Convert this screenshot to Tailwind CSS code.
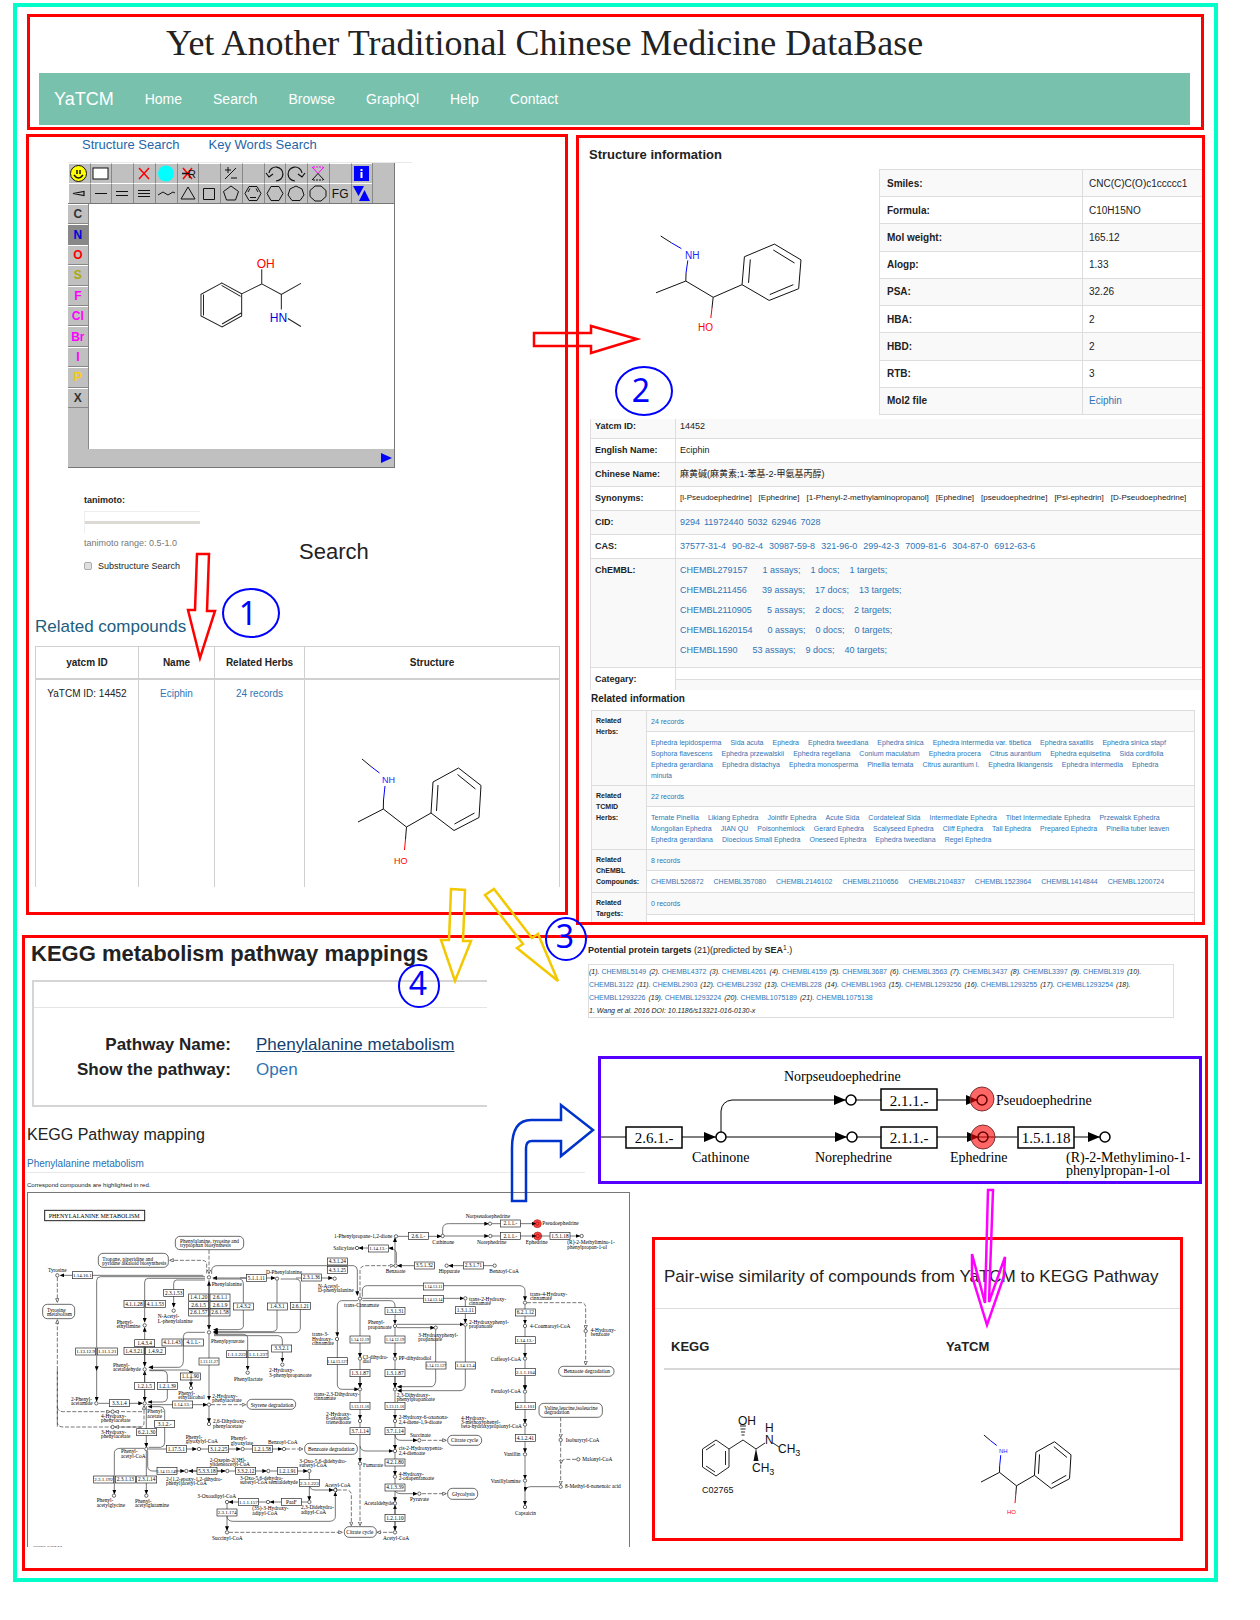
<!DOCTYPE html>
<html lang="en">
<head>
<meta charset="utf-8">
<meta name="viewport" content="width=device-width, initial-scale=1">
<title>YaTCM - Yet Another Traditional Chinese Medicine DataBase</title>
<script src="https://cdn.jsdelivr.net/npm/@tailwindcss/browser@4"></script>
</head>
<body class="bg-white font-['Liberation_Sans','Noto_Sans_CJK_SC',sans-serif] text-[#222] pb-[38px]">

<!-- shared ephedrine skeleton -->
<svg class="absolute h-0 w-0" aria-hidden="true">
  <defs>
    <g id="mol" fill="none" stroke="#111" stroke-width="1">
      <path vector-effect="non-scaling-stroke" d="M4 0L13 7.500M25.500 41L25.300 50L0 63M25.300 50L48.500 68L73 54L75 23L100.500 9L123 26.500L121 58.500L96 71.500L73 54M78.500 52L80 26M99.500 15.500L117.500 30M116.500 54L96.500 65M48.500 68L47.500 80"/>
      <path vector-effect="non-scaling-stroke" stroke="#00f" d="M13 7.500L21.500 14M27 27L25.500 41"/>
      <path vector-effect="non-scaling-stroke" stroke="#f00" d="M47.500 80L46.500 91"/>
    </g>
  </defs>
</svg>

<main class="relative mt-[3px] ml-[13px] mr-[42px] border-4 border-[#00ffc8] pt-[7px] pb-[7px]">

  <header class="mx-[10px] border-3 border-[#f00] px-[9px] pt-[8px] pb-[2px]">
    <h1 class="h-[48px] pl-[127px] font-['Liberation_Serif',serif] text-[36px] leading-[36px] whitespace-nowrap">Yet Another Traditional Chinese Medicine DataBase</h1>
    <nav class="mr-[2px] flex h-[52px] items-center gap-px bg-[#78c2ad] text-[14px] text-white">
      <a href="#" class="px-[15px] text-[18px]">YaTCM</a>
      <a href="#" class="px-[15px]">Home</a>
      <a href="#" class="px-[15px]">Search</a>
      <a href="#" class="px-[15px]">Browse</a>
      <a href="#" class="px-[15px]">GraphQl</a>
      <a href="#" class="px-[15px]">Help</a>
      <a href="#" class="px-[15px]">Contact</a>
    </nav>
  </header>

  <div class="mt-[4px] ml-[9px] mr-[9px] grid grid-cols-[542fr_629fr] items-start gap-2">

    <!-- structure search -->
    <section class="min-w-0 border-3 border-[#f00] pb-[25px]">
      <div class="flex h-[25px] gap-[29px] pl-[53px] text-[13px] leading-[16px] text-[#1f66a8]">
        <a href="#">Structure Search</a>
        <a href="#">Key Words Search</a>
      </div>
      <div class="ml-[39px] w-[344px] border-t border-[#e8e8e8]">
        <div class="flex h-[305px] w-[327px] flex-col border-r border-b border-[#777] bg-[#c0c0c0]">
          <div class="grid h-[41px] grid-cols-15 grid-rows-2 border-b border-[#777]">
            <button aria-label="Smiles" class="border-t border-l border-t-white border-l-white"><svg class="h-[19px] w-[20px]" viewBox="0 0 20 19"><circle cx="9.500" cy="9.500" r="8" fill="#ff0" stroke="#111"/><path d="M8 6v4M11 6v4M5 11q4.500 6 9 0" fill="none" stroke="#111" stroke-width="1.500"/></svg></button>
            <button aria-label="Clear" class="border-t border-l border-t-white border-l-[#888]"><svg class="h-[19px] w-[20px]" viewBox="0 0 20 19"><rect x="2" y="4" width="15" height="11" fill="#fff" stroke="#111"/></svg></button>
            <span class="border-t border-l border-t-white border-l-[#888]"></span>
            <button aria-label="Delete" class="border-t border-l border-t-white border-l-[#888]"><svg class="h-[19px] w-[20px]" viewBox="0 0 20 19"><path d="M5 4l10 11M15 4L5 15" stroke="#f00" stroke-width="1.500"/></svg></button>
            <button aria-label="Mark" class="border-t border-l border-t-white border-l-[#888]"><svg class="h-[19px] w-[20px]" viewBox="0 0 20 19"><circle cx="10" cy="9.500" r="8" fill="#0ff"/></svg></button>
            <button aria-label="Delete group" class="border-t border-l border-t-white border-l-[#888]"><svg class="h-[19px] w-[20px]" viewBox="0 0 20 19"><path d="M5 4l9 11M14 4L5 15" stroke="#f00" stroke-width="1.500"/><path d="M4 9.500h7" stroke="#111" stroke-width="1.500"/><text x="10" y="14" font-size="11" fill="#111">R</text></svg></button>
            <span class="border-t border-l border-t-white border-l-[#888]"></span>
            <button aria-label="Charge" class="border-t border-l border-t-white border-l-[#888]"><svg class="h-[19px] w-[20px]" viewBox="0 0 20 19"><path d="M15 4L4 15M4 6h6M7 3v6M10 14h6" stroke="#111"/></svg></button>
            <span class="border-t border-l border-t-white border-l-[#888]"></span>
            <button aria-label="Undo" class="border-t border-l border-t-white border-l-[#888]"><svg class="h-[19px] w-[20px]" viewBox="0 0 20 19"><path d="M11 17a7 7 0 1 0-7-8M1 9l3 4 4-3" fill="none" stroke="#111" stroke-width="1.200"/></svg></button>
            <button aria-label="Redo" class="border-t border-l border-t-white border-l-[#888]"><svg class="h-[19px] w-[20px]" viewBox="0 0 20 19"><path d="M9 17a7 7 0 1 1 7-8M12 10l4 3 3-4" fill="none" stroke="#111" stroke-width="1.200"/></svg></button>
            <button aria-label="Spiro" class="border-t border-l border-t-white border-l-[#888]"><svg class="h-[19px] w-[20px]" viewBox="0 0 20 19"><path d="M4 3l6 6.500L16 3" fill="none" stroke="#f0f"/><path d="M5 3h10" stroke="#f0f" stroke-dasharray="2 1"/><path d="M4 16l6-6.500 6 6.500" fill="none" stroke="#111"/><path d="M5 16h10" stroke="#111" stroke-dasharray="2 1"/></svg></button>
            <span class="border-t border-l border-t-white border-l-[#888]"></span>
            <button aria-label="Info" class="border-t border-l border-t-white border-l-[#888]"><svg class="h-[19px] w-[20px]" viewBox="0 0 20 19"><rect x="2" y="2" width="15" height="15" fill="#00f"/><path d="M9.500 5v2M9.500 8v6" stroke="#fff" stroke-width="2"/></svg></button>
            <span class="border-l border-[#888]"></span>
            <button aria-label="Stereo bond" class="border-t border-l border-t-white border-l-white"><svg class="h-[19px] w-[20px]" viewBox="0 0 20 19"><path d="M4 9.500l11-2v4z" fill="none" stroke="#111" stroke-width="1.200"/></svg></button>
            <button aria-label="Single bond" class="border-t border-l border-t-white border-l-[#888]"><svg class="h-[19px] w-[20px]" viewBox="0 0 20 19"><path d="M4 9.500h12" stroke="#111"/></svg></button>
            <button aria-label="Double bond" class="border-t border-l border-t-white border-l-[#888]"><svg class="h-[19px] w-[20px]" viewBox="0 0 20 19"><path d="M4 7.500h12M4 11.500h12" stroke="#111"/></svg></button>
            <button aria-label="Triple bond" class="border-t border-l border-t-white border-l-[#888]"><svg class="h-[19px] w-[20px]" viewBox="0 0 20 19"><path d="M4 6.500h12M4 9.500h12M4 12.500h12" stroke="#111"/></svg></button>
            <button aria-label="Chain" class="border-t border-l border-t-white border-l-[#888]"><svg class="h-[19px] w-[20px]" viewBox="0 0 20 19"><path d="M2 11l5-3 5 3 5-3 2 1" fill="none" stroke="#111"/></svg></button>
            <button aria-label="Ring 3" class="border-t border-l border-t-white border-l-[#888]"><svg class="h-[19px] w-[20px]" viewBox="0 0 20 19"><path d="M10 3l7 12H3z" fill="none" stroke="#111"/></svg></button>
            <button aria-label="Ring 4" class="border-t border-l border-t-white border-l-[#888]"><svg class="h-[19px] w-[20px]" viewBox="0 0 20 19"><path d="M4.500 4.500h11v11h-11z" fill="none" stroke="#111"/></svg></button>
            <button aria-label="Ring 5" class="border-t border-l border-t-white border-l-[#888]"><svg class="h-[19px] w-[20px]" viewBox="0 0 20 19"><path d="M10 2l7.500 5.500-3 8.500h-9l-3-8.500z" fill="none" stroke="#111"/></svg></button>
            <button aria-label="Benzene" class="border-t border-l border-t-white border-l-[#888]"><svg class="h-[19px] w-[20px]" viewBox="0 0 20 19"><path d="M6 2.500h8l4 7-4 7H6l-4-7zM7 13.500h6M5 8l2-3.500M15 8l-2-3.500" fill="none" stroke="#111"/></svg></button>
            <button aria-label="Ring 6" class="border-t border-l border-t-white border-l-[#888]"><svg class="h-[19px] w-[20px]" viewBox="0 0 20 19"><path d="M6 2.500h8l4 7-4 7H6l-4-7z" fill="none" stroke="#111"/></svg></button>
            <button aria-label="Ring 7" class="border-t border-l border-t-white border-l-[#888]"><svg class="h-[19px] w-[20px]" viewBox="0 0 20 19"><path d="M10 2l6 3 2 6-4 5.500H6L2 11l2-6z" fill="none" stroke="#111"/></svg></button>
            <button aria-label="Ring 8" class="border-t border-l border-t-white border-l-[#888]"><svg class="h-[19px] w-[20px]" viewBox="0 0 20 19"><path d="M7 2h6l5 4.500v6L13 17H7l-5-4.500v-6z" fill="none" stroke="#111"/></svg></button>
            <button class="border-t border-l border-t-white border-l-[#888] text-[12px] leading-none text-[#111]">FG</button>
            <button aria-label="Flip" class="border-t border-l border-t-white border-l-[#888]"><svg class="h-[19px] w-[20px]" viewBox="0 0 20 19"><path d="M1 2h11L6.500 12zM7 17h11L12.500 6z" fill="#00f"/></svg></button>
            <span class="border-l border-[#888]"></span>
          </div>
          <div class="flex grow">
            <div class="w-[22px] border-r border-[#888]">
              <div class="grid h-[204px] grid-rows-10 text-[12px] font-bold text-[#333]">
                <button class="border-t border-b border-t-white border-b-[#888] leading-none">C</button>
                <button class="border-t border-b border-t-white border-b-[#888] bg-[#888] leading-none text-[#00d]">N</button>
                <button class="border-t border-b border-t-white border-b-[#888] leading-none text-[#f00]">O</button>
                <button class="border-t border-b border-t-white border-b-[#888] leading-none text-[#aa0]">S</button>
                <button class="border-t border-b border-t-white border-b-[#888] leading-none text-[#f0f]">F</button>
                <button class="border-t border-b border-t-white border-b-[#888] leading-none text-[#f0f]">Cl</button>
                <button class="border-t border-b border-t-white border-b-[#888] leading-none text-[#f0f]">Br</button>
                <button class="border-t border-b border-t-white border-b-[#888] leading-none text-[#f0f]">I</button>
                <button class="border-t border-b border-t-white border-b-[#888] leading-none text-[#fc0]">P</button>
                <button class="border-t border-b border-t-white border-b-[#888] leading-none">X</button>
              </div>
            </div>
            <svg class="grow bg-white" viewBox="90 204 304 244" role="img" aria-label="Drawn structure">
              <g fill="none" stroke="#222"><path d="M222 282.500L242 293.500V315.500L222.500 326.500L201.500 315.500V294L222.500 282.500M242 293.500L262 283.500V269M262 283.500L281.500 294L301 283M281.500 294V309M288 318L301 326M222 285L241 296M241.500 312.500L222.500 323.500M204 294V315"/></g>
              <text x="257" y="268" font-size="12" fill="#f00">OH</text><text x="270" y="321" font-size="12" fill="#00d">HN</text>
            </svg>
          </div>
          <div class="flex h-[19px] items-center justify-end pr-[2px]"><svg class="h-[12px] w-[11px]" viewBox="0 0 11 12"><path d="M0 1l11 5-11 5z" fill="#00f"/></svg></div>
        </div>
      </div>

      <form class="mt-[26px] flex pl-[55px] text-[9px] leading-[12px]">
        <div class="w-[116px]">
          <label for="tan" class="block font-bold">tanimoto:</label>
          <div class="mt-[5px] flex h-[22px] items-center border-t border-l border-[#eee]">
            <input id="tan" type="range" min="0.5" max="1" step="0.1" class="h-[3px] w-full appearance-none bg-[#ddd9d4] [&::-webkit-slider-thumb]:appearance-none">
          </div>
          <p class="mt-[4px] text-[#777] whitespace-nowrap">tanimoto range: 0.5-1.0</p>
          <label class="mt-[11px] flex items-center gap-[6px] whitespace-nowrap"><input type="checkbox" class="h-[8px] w-[8px] appearance-none rounded-[2px] border border-[#aaa] bg-[#e0e0e0]">Substructure Search</label>
        </div>
        <button type="button" class="ml-[99px] mb-[4px] self-end text-[22px] leading-[32px]">Search</button>
      </form>

      <h2 class="mt-[43px] pl-[6px] text-[17px] leading-[24px] text-[#1c5d80]">Related compounds</h2>
      <div class="mt-[7px] mr-[5px] ml-[6px]">
        <table class="w-full table-fixed text-center text-[10px]">
          <colgroup><col class="w-[103px]"><col class="w-[76px]"><col class="w-[90px]"><col></colgroup>
          <thead><tr class="h-[32px] border-t border-b-2 border-t-[#d0d0d0] border-b-[#d0d0d0]">
            <th class="border-x border-[#d0d0d0]">yatcm ID</th><th class="border-x border-[#d0d0d0]">Name</th><th class="border-x border-[#d0d0d0]">Related Herbs</th><th class="border-x border-[#d0d0d0]">Structure</th>
          </tr></thead>
          <tbody><tr class="align-top">
            <td class="border-x border-[#d0d0d0] pt-[6px]">YaTCM ID: 14452</td>
            <td class="border-x border-[#d0d0d0] pt-[6px]"><a href="#" class="text-[#2f74b5]">Eciphin</a></td>
            <td class="border-x border-[#d0d0d0] pt-[6px]"><a href="#" class="text-[#2f74b5]">24 records</a></td>
            <td class="border-x border-[#d0d0d0]">
              <svg class="h-[207px] w-[253px]" viewBox="305 680 253 207" font-size="9"><svg x="358" y="759" width="123" height="91" viewBox="0 0 123 91" overflow="visible"><use href="#mol"/></svg><text x="382" y="783" fill="#22f">NH</text><text x="394" y="864" fill="#f00">HO</text></svg>
            </td>
          </tr></tbody>
        </table>
      </div>
    </section>

    <!-- structure information -->
    <section class="mt-px h-[790px] min-w-0 overflow-hidden border-3 border-[#f00]">
      <h2 class="mt-[9px] pl-[10px] text-[13px] leading-[16px] font-bold">Structure information</h2>
      <div class="mt-[6px] flex">
        <svg class="h-[246px] min-w-0 grow" viewBox="579 169 300 246" preserveAspectRatio="xMinYMin" font-size="10"><svg x="656" y="236" width="145" height="82" viewBox="0 0 123 91" preserveAspectRatio="none" overflow="visible"><use href="#mol"/></svg><text x="685" y="259" fill="#22f">NH</text><text x="698" y="331" fill="#f00">HO</text></svg>
        <table class="h-[246px] w-[323px] shrink-0 border-l border-[#ddd] text-left text-[10px]">
          <tr class="border-y border-[#ddd] bg-[#f9f9f9]"><th class="w-[203px] pl-[7px]">Smiles:</th><td class="border-l border-[#ddd] pl-[6px]">CNC(C)C(O)c1ccccc1</td></tr>
          <tr class="border-y border-[#ddd]"><th class="pl-[7px]">Formula:</th><td class="border-l border-[#ddd] pl-[6px]">C10H15NO</td></tr>
          <tr class="border-y border-[#ddd] bg-[#f9f9f9]"><th class="pl-[7px]">Mol weight:</th><td class="border-l border-[#ddd] pl-[6px]">165.12</td></tr>
          <tr class="border-y border-[#ddd]"><th class="pl-[7px]">Alogp:</th><td class="border-l border-[#ddd] pl-[6px]">1.33</td></tr>
          <tr class="border-y border-[#ddd] bg-[#f9f9f9]"><th class="pl-[7px]">PSA:</th><td class="border-l border-[#ddd] pl-[6px]">32.26</td></tr>
          <tr class="border-y border-[#ddd]"><th class="pl-[7px]">HBA:</th><td class="border-l border-[#ddd] pl-[6px]">2</td></tr>
          <tr class="border-y border-[#ddd] bg-[#f9f9f9]"><th class="pl-[7px]">HBD:</th><td class="border-l border-[#ddd] pl-[6px]">2</td></tr>
          <tr class="border-y border-[#ddd]"><th class="pl-[7px]">RTB:</th><td class="border-l border-[#ddd] pl-[6px]">3</td></tr>
          <tr class="border-y border-[#ddd] bg-[#f9f9f9]"><th class="pl-[7px]">Mol2 file</th><td class="border-l border-[#ddd] pl-[6px]"><a href="#" class="text-[#2f74b5]">Eciphin</a></td></tr>
        </table>
      </div>

      <div class="mt-[4px] ml-[11px]">
        <table class="w-full table-fixed border-l border-[#ddd] text-left text-[9px] leading-[14px] whitespace-nowrap">
          <colgroup><col class="w-[85px]"><col></colgroup>
          <tr class="h-[19px] border-b border-[#ddd] bg-[#f9f9f9]"><th class="pl-[4px] pb-[4px]">Yatcm ID:</th><td class="border-l border-[#ddd] pl-[4px] pb-[4px]">14452</td></tr>
          <tr class="h-[24px] border-b border-[#ddd]"><th class="pl-[4px]">English Name:</th><td class="border-l border-[#ddd] pl-[4px]">Eciphin</td></tr>
          <tr class="h-[24px] border-b border-[#ddd] bg-[#f9f9f9]"><th class="pl-[4px]">Chinese Name:</th><td class="border-l border-[#ddd] pl-[4px]">麻黄碱(麻黄素;1-苯基-2-甲氨基丙醇)</td></tr>
          <tr class="h-[24px] border-b border-[#ddd]"><th class="pl-[4px]">Synonyms:</th><td class="border-l border-[#ddd] pl-[4px]"><div class="flex gap-[7px] text-[8px]"><span>[l-Pseudoephedrine]</span> <span>[Ephedrine]</span> <span>[1-Phenyl-2-methylaminopropanol]</span> <span>[Ephedine]</span> <span>[pseudoephedrine]</span> <span>[Psi-ephedrin]</span> <span>[D-Pseudoephedrine]</span></div></td></tr>
          <tr class="h-[24px] border-b border-[#ddd] bg-[#f9f9f9]"><th class="pl-[4px]">CID:</th><td class="border-l border-[#ddd] pl-[4px]"><div class="flex gap-[4px] text-[#2f74b5]"><a href="#">9294</a><a href="#">11972440</a><a href="#">5032</a><a href="#">62946</a><a href="#">7028</a></div></td></tr>
          <tr class="h-[24px] border-b border-[#ddd]"><th class="pl-[4px]">CAS:</th><td class="border-l border-[#ddd] pl-[4px]"><div class="flex gap-[6px] text-[#2f74b5]"><a href="#">37577-31-4</a><a href="#">90-82-4</a><a href="#">30987-59-8</a><a href="#">321-96-0</a><a href="#">299-42-3</a><a href="#">7009-81-6</a><a href="#">304-87-0</a><a href="#">6912-63-6</a></div></td></tr>
          <tr class="h-[109px] border-b border-[#ddd] bg-[#f9f9f9] align-top"><th class="pt-px pl-[4px] leading-[20px]">ChEMBL:</th><td class="border-l border-[#ddd] pt-px pl-[4px] leading-[20px] text-[#2f74b5]">
            <div class="flex gap-[10px]"><a href="#" class="mr-[5px]">CHEMBL279157</a><a href="#">1 assays;</a><a href="#">1 docs;</a><a href="#">1 targets;</a></div>
            <div class="flex gap-[10px]"><a href="#" class="mr-[5px]">CHEMBL211456</a><a href="#">39 assays;</a><a href="#">17 docs;</a><a href="#">13 targets;</a></div>
            <div class="flex gap-[10px]"><a href="#" class="mr-[5px]">CHEMBL2110905</a><a href="#">5 assays;</a><a href="#">2 docs;</a><a href="#">2 targets;</a></div>
            <div class="flex gap-[10px]"><a href="#" class="mr-[5px]">CHEMBL1620154</a><a href="#">0 assays;</a><a href="#">0 docs;</a><a href="#">0 targets;</a></div>
            <div class="flex gap-[10px]"><a href="#" class="mr-[5px]">CHEMBL1590</a><a href="#">53 assays;</a><a href="#">9 docs;</a><a href="#">40 targets;</a></div>
          </td></tr>
          <tr class="h-[12px]"><th rowspan="2" class="pl-[4px]">Categary:</th><td class="border-l border-b border-[#ddd]"></td></tr>
          <tr class="h-[11px]"><td class="border-l border-[#ddd] bg-[#f9f9f9]"></td></tr>
        </table>
      </div>

      <h2 class="mt-px pl-[12px] text-[10px] leading-[16px] font-bold">Related information</h2>
      <div class="mt-[3px] mr-[7px] ml-[12px]">
        <table class="w-full table-fixed border border-[#ddd] text-left text-[7px] leading-[11px] whitespace-nowrap">
          <colgroup><col class="w-[55px]"><col></colgroup>
          <tr class="h-[21px] border-b border-[#ddd] bg-[#f9f9f9]"><th rowspan="2" class="border-r border-[#ddd] py-[4px] pl-[4px] align-top">Related<br>Herbs:</th><td class="pl-[4px]"><a href="#" class="text-[#2f74b5]">24 records</a></td></tr>
          <tr class="h-[54px] border-b border-[#ddd]"><td class="pl-[4px] text-[#2f74b5]">
            <div class="flex gap-[9px]"><a href="#">Ephedra lepidosperma</a><a href="#">Sida acuta</a><a href="#">Ephedra</a><a href="#">Ephedra tweediana</a><a href="#">Ephedra sinica</a><a href="#">Ephedra intermedia var. tibetica</a><a href="#">Ephedra saxatilis</a><a href="#">Ephedra sinica stapf</a></div>
            <div class="flex gap-[9px]"><a href="#">Sophora flavescens</a><a href="#">Ephedra przewalskii</a><a href="#">Ephedra regeliana</a><a href="#">Conium maculatum</a><a href="#">Ephedra procera</a><a href="#">Citrus aurantium</a><a href="#">Ephedra equisetina</a><a href="#">Sida cordifolia</a></div>
            <div class="flex gap-[9px]"><a href="#">Ephedra gerardiana</a><a href="#">Ephedra distachya</a><a href="#">Ephedra monosperma</a><a href="#">Pinellia ternata</a><a href="#">Citrus aurantium l.</a><a href="#">Ephedra likiangensis</a><a href="#">Ephedra intermedia</a><a href="#">Ephedra</a></div>
            <div><a href="#">minuta</a></div>
          </td></tr>
          <tr class="h-[21px] border-b border-[#ddd] bg-[#f9f9f9]"><th rowspan="2" class="border-r border-[#ddd] py-[4px] pl-[4px] align-top">Related<br>TCMID<br>Herbs:</th><td class="pl-[4px]"><a href="#" class="text-[#2f74b5]">22 records</a></td></tr>
          <tr class="h-[43px] border-b border-[#ddd]"><td class="pl-[4px] text-[#2f74b5]">
            <div class="flex gap-[9px]"><a href="#">Ternate Pinellia</a><a href="#">Likiang Ephedra</a><a href="#">Jointfir Ephedra</a><a href="#">Acute Sida</a><a href="#">Cordateleaf Sida</a><a href="#">Intermediate Ephedra</a><a href="#">Tibet Intermediate Ephedra</a><a href="#">Przewalsk Ephedra</a></div>
            <div class="flex gap-[9px]"><a href="#">Mongolian Ephedra</a><a href="#">JIAN QU</a><a href="#">Poisonhemlock</a><a href="#">Gerard Ephedra</a><a href="#">Scalyseed Ephedra</a><a href="#">Cliff Ephedra</a><a href="#">Tall Ephedra</a><a href="#">Prepared Ephedra</a><a href="#">Pinellia tuber leaven</a></div>
            <div class="flex gap-[9px]"><a href="#">Ephedra gerardiana</a><a href="#">Dioecious Small Ephedra</a><a href="#">Oneseed Ephedra</a><a href="#">Ephedra tweediana</a><a href="#">Regel Ephedra</a></div>
          </td></tr>
          <tr class="h-[21px] border-b border-[#ddd] bg-[#f9f9f9]"><th rowspan="2" class="border-r border-[#ddd] py-[4px] pl-[4px] align-top">Related<br>ChEMBL<br>Compounds:</th><td class="pl-[4px]"><a href="#" class="text-[#2f74b5]">8 records</a></td></tr>
          <tr class="h-[22px] border-b border-[#ddd]"><td class="pl-[4px] text-[#2f74b5]"><div class="flex gap-[10px]"><a href="#">CHEMBL526872</a><a href="#">CHEMBL357080</a><a href="#">CHEMBL2146102</a><a href="#">CHEMBL2110656</a><a href="#">CHEMBL2104837</a><a href="#">CHEMBL1523964</a><a href="#">CHEMBL1414844</a><a href="#">CHEMBL1200724</a></div></td></tr>
          <tr class="h-[21px] border-b border-[#ddd] bg-[#f9f9f9]"><th rowspan="2" class="border-r border-[#ddd] py-[4px] pl-[4px] align-top">Related<br>Targets:</th><td class="pl-[4px]"><a href="#" class="text-[#2f74b5]">0 records</a></td></tr>
          <tr class="h-[9px]"><td></td></tr>
        </table>
      </div>
    </section>
  </div>

  <!-- pathway mapping -->
  <section class="mt-[10px] mr-[6px] ml-[5px] border-3 border-[#f00] pb-[21px]">
    <div class="grid h-[254px] grid-cols-[560fr_620fr]">
      <div class="min-w-0">
        <h2 class="pl-[6px] text-[22px] leading-[32px] font-bold">KEGG metabolism pathway mappings</h2>
        <div class="mt-[10px] ml-[7px] h-[127px] w-[455px] border-y-2 border-l-2 border-[#d5d5d5]">
          <div class="h-[26px] border-b border-[#e5e5e5]"></div>
          <dl class="mt-[24px] grid grid-cols-[197px_1fr] gap-x-[25px] text-[17px] leading-[25px]">
            <dt class="text-right font-bold">Pathway Name:</dt><dd><a href="#" class="text-[#14406f] underline">Phenylalanine metabolism</a></dd>
            <dt class="text-right font-bold">Show the pathway:</dt><dd><a href="#" class="text-[#2f74b5]">Open</a></dd>
          </dl>
        </div>
        <h3 class="mt-[18px] pl-[2px] text-[16px] leading-[20px]">KEGG Pathway mapping</h3>
        <div class="mt-[10px] ml-[2px] border-b border-[#e8e8e8] text-[10px] leading-[17px]"><a href="#" class="text-[#1f6fb5]">Phenylalanine metabolism</a></div>
        <p class="mt-[6px] pl-[2px] text-[6px] leading-[12px]">Correspond compounds are highlighted in red.</p>
      </div>
      <div class="min-w-0">
        <h3 class="mt-[4px] pl-[3px] text-[9px] leading-[16px]"><b>Potential protein targets</b> (21)(predicted by <b>SEA</b><sup>1</sup>.)</h3>
        <div class="mt-[6px] mr-[31px] ml-[3px] border border-[#ddd] text-[7px] leading-[13px] whitespace-nowrap">
          <p class="flex gap-[3px] italic">
            <span>(1). <a href="#" class="text-[#2f74b5] not-italic">CHEMBL5149</a></span><span>(2). <a href="#" class="text-[#2f74b5] not-italic">CHEMBL4372</a></span><span>(3). <a href="#" class="text-[#2f74b5] not-italic">CHEMBL4261</a></span><span>(4). <a href="#" class="text-[#2f74b5] not-italic">CHEMBL4159</a></span><span>(5). <a href="#" class="text-[#2f74b5] not-italic">CHEMBL3687</a></span><span>(6). <a href="#" class="text-[#2f74b5] not-italic">CHEMBL3563</a></span><span>(7). <a href="#" class="text-[#2f74b5] not-italic">CHEMBL3437</a></span><span>(8). <a href="#" class="text-[#2f74b5] not-italic">CHEMBL3397</a></span><span>(9). <a href="#" class="text-[#2f74b5] not-italic">CHEMBL319</a></span><span>(10).</span>
          </p>
          <p class="flex gap-[3px] italic">
            <a href="#" class="text-[#2f74b5] not-italic">CHEMBL3122</a><span>(11). <a href="#" class="text-[#2f74b5] not-italic">CHEMBL2903</a></span><span>(12). <a href="#" class="text-[#2f74b5] not-italic">CHEMBL2392</a></span><span>(13). <a href="#" class="text-[#2f74b5] not-italic">CHEMBL228</a></span><span>(14). <a href="#" class="text-[#2f74b5] not-italic">CHEMBL1963</a></span><span>(15). <a href="#" class="text-[#2f74b5] not-italic">CHEMBL1293256</a></span><span>(16). <a href="#" class="text-[#2f74b5] not-italic">CHEMBL1293255</a></span><span>(17). <a href="#" class="text-[#2f74b5] not-italic">CHEMBL1293254</a></span><span>(18).</span>
          </p>
          <p class="flex gap-[3px] italic">
            <a href="#" class="text-[#2f74b5] not-italic">CHEMBL1293226</a><span>(19). <a href="#" class="text-[#2f74b5] not-italic">CHEMBL1293224</a></span><span>(20). <a href="#" class="text-[#2f74b5] not-italic">CHEMBL1075189</a></span><span>(21). <a href="#" class="text-[#2f74b5] not-italic">CHEMBL1075138</a></span>
          </p>
          <p class="italic">1. Wang et al. 2016 DOI: 10.1186/s13321-016-0130-x</p>
        </div>
        <div class="mt-[38px] mr-[3px] ml-[13px] h-[128px] border-3 border-[#50f]">
          <svg class="h-[122px] w-full font-['Liberation_Serif',serif]" viewBox="601 1059 598 122" preserveAspectRatio="xMinYMin" font-size="14" fill="#000">
            <g fill="none" stroke="#000"><path d="M601 1137H626M682 1137H1017M1073 1137H1100M721 1132V1111Q722 1101 732 1100H977"/></g>
            <g fill="#000"><path d="M704 1132l12 5-12 5zM834 1095l12 5-12 5zM835 1132l12 5-12 5zM966 1095l12 5-12 5zM967 1132l12 5-12 5zM1088 1132l12 5-12 5z"/></g>
            <g fill="#f00" fill-opacity=".6" stroke="#733"><circle cx="982" cy="1099" r="12"/><circle cx="983" cy="1137" r="12"/></g>
            <g fill="#fff" stroke="#000" stroke-width="1.500"><circle cx="721" cy="1137" r="5"/><circle cx="851" cy="1100" r="5"/><circle cx="852" cy="1137" r="5"/><circle cx="1105" cy="1137" r="5"/><circle cx="982" cy="1100" r="5" fill="none" stroke="#600"/><circle cx="983" cy="1137" r="5" fill="none" stroke="#600"/><rect x="626" y="1127" width="56" height="21"/><rect x="881" y="1089" width="56" height="21"/><rect x="881" y="1127" width="56" height="21"/><rect x="1018" y="1127" width="56" height="21"/></g>
            <g font-size="15" text-anchor="middle"><text x="654" y="1143">2.6.1.-</text><text x="909" y="1106">2.1.1.-</text><text x="909" y="1143">2.1.1.-</text><text x="1046" y="1143">1.5.1.18</text></g>
            <text x="784" y="1081">Norpseudoephedrine</text><text x="996" y="1105">Pseudoephedrine</text><text x="692" y="1162">Cathinone</text><text x="815" y="1162">Norephedrine</text><text x="950" y="1162">Ephedrine</text><text x="1066" y="1162">(R)-2-Methylimino-1-</text><text x="1066" y="1175">phenylpropan-1-ol</text>
          </svg>
        </div>
      </div>
    </div>

    <div class="grid grid-cols-[605fr_575fr] items-start">
      <div class="ml-[2px] min-w-0 border-x border-t border-[#777]">
        <svg id="map" class="block h-[354px] w-full font-['Liberation_Serif',serif]" viewBox="24 39 1803 1062" preserveAspectRatio="xMinYMin" role="img" aria-label="Phenylalanine metabolism pathway map"></svg>
      </div>

      <section class="mt-[45px] mr-[22px] ml-[22px] h-[304px] border-3 border-[#f00]">
        <h2 class="border-b border-[#ddd] pt-[24px] pb-[19px] pl-[9px] text-[17px] leading-[25px] whitespace-nowrap">Pair-wise similarity of compounds from YaTCM to KEGG Pathway</h2>
        <div class="ml-[9px]">
          <table class="w-full table-fixed text-left">
            <colgroup><col class="w-[274px]"><col></colgroup>
            <thead><tr class="h-[60px] border-b-2 border-[#d8d8d8] text-[13px]"><th class="pt-[16px] pl-[7px]">KEGG</th><th class="pt-[16px] pl-[8px]">YaTCM</th></tr></thead>
            <tbody><tr>
              <td><svg class="h-[160px] w-[270px]" viewBox="664 1370 270 160" font-size="12" fill="#111"><g fill="none" stroke="#222"><path d="M729 1449L716 1440L702.500 1449V1467L716 1476L729 1467V1449L743 1440L756 1449L765 1443M773 1443L779 1447M725.500 1451V1465M715 1444L706 1450M706 1466L715 1472"/><path d="M740 1426h6M740.500 1429h5M741 1432h4M741.500 1435h3"/></g><path d="M756 1448l2.500 13h-5z"/><text x="738" y="1425">OH</text><text x="765" y="1444">N</text><text x="765" y="1432">H</text><text x="778" y="1453">CH<tspan font-size="9" dy="3">3</tspan></text><text x="752" y="1472">CH<tspan font-size="9" dy="3">3</tspan></text><text x="702" y="1493" font-size="9">C02765</text></svg></td>
              <td><svg class="h-[160px] w-[240px]" viewBox="938 1370 240 160" font-size="6"><svg x="981" y="1435" width="90" height="68" viewBox="0 0 123 91" preserveAspectRatio="none" overflow="visible"><use href="#mol"/></svg><text x="999" y="1453" fill="#22f">NH</text><text x="1007" y="1514" fill="#f00">HO</text></svg></td>
            </tr></tbody>
          </table>
        </div>
      </section>
    </div>
  </section>

  <!-- step arrows and numbers lying over the panels -->
  <svg class="pointer-events-none absolute top-0 left-0 h-[1571px] w-[1197px]" viewBox="17 7 1197 1571" aria-hidden="true">
    <g fill="none" stroke-width="2.500">
      <path stroke="#f00" d="M534 333H591V326L637 339L591 353V346H534ZM197 554H209L207 611H215L200 658L188 610H195Z"/>
      <path stroke="#f2c800" d="M451 889L465 890L463 941H471L455 981L441 940H449ZM485 895L494 889L532 938L538 934L558 981L517 948L523 944Z"/>
      <path stroke="#0033cc" d="M512 1201V1148Q512 1120 531 1120H561V1105L593 1130L561 1156V1141H532Q526 1141 526 1148V1201Z"/>
      <path stroke="#f0f" d="M988 1190H993L989 1302L1005 1257L1004 1276L987 1325L972 1276V1254L985 1303Z"/>
      <g stroke="#00f" stroke-width="2"><ellipse cx="251" cy="613" rx="28" ry="24"/><ellipse cx="644" cy="391" rx="28" ry="24"/><ellipse cx="566" cy="939" rx="20" ry="21"/><ellipse cx="419" cy="986" rx="20" ry="21"/></g>
    </g>
    <g fill="#00f" font-size="32" text-anchor="middle" class="font-['Noto_Sans',sans-serif]"><text x="248" y="625">1</text><text x="641" y="402">2</text><text x="565" y="948">3</text><text x="418" y="995">4</text></g>
  </svg>
</main>

<script>
// Each tile holds one quarter of the KEGG map, drawn in its own local coordinates.
const tiles = [
 {x:0,y:0,
  solid:["M550 286H122","M555 290H242Q230 290 230 302V570","M555 295H385Q374 295 374 306V425","M555 300H470Q461 300 461 310V380","M575 282V270Q577 257 592 257H1001Q1011 259 1012 270V345","M660 294H764","M828 294H936","M738 294H580","M567 300V446","M567 446V306","M580 297H660Q670 299 670 310V440Q668 449 655 449H582","M771 302V445Q769 455 757 455H582","M782 297H825Q841 297 841 310V445Q839 458 825 458H582","M555 457H502Q490 458 490 470V545Q488 562 475 562H388","M582 463H670Q683 464 683 475V568","M582 467H775Q787 468 787 480V544","M374 560V444","M374 480V557","M388 570H500Q513 572 513 585","M567 463V658"],
  dash:["M112 292V366","M112 740V420","M567 210V280","M560 280V250Q558 241 545 241H450"],
  pill:[[68,373,96,43],[466,169,205,40],[235,220,210,42]],
  box:[[187,286,"1.14.16.1"],[342,372,"4.1.1.28"],[406,372,"4.1.1.53"],[461,339,"2.3.1.53"],[536,353,"1.4.1.20"],[600,353,"2.6.1.1"],[536,376,"2.6.1.5"],[600,376,"2.6.1.9"],[536,398,"2.6.1.57"],[600,398,"2.6.1.58"],[670,380,"1.4.3.2"],[772,380,"1.4.3.1"],[841,378,"2.6.1.21"],[709,294,"5.1.1.11"],[874,293,"2.3.1.36"],[374,490,"1.4.3.4"],[342,513,"1.4.3.21"],[406,513,"1.4.9.2"],[456,488,"4.1.1.43"],[520,488,"4.1.1.-"],[197,515,"1.13.12.9"],[262,515,"1.11.1.21"],[567,545,"1.13.11.27"],[650,523,"1.1.1.222"],[714,523,"1.1.1.237"],[785,506,"3.3.2.1"],[511,590,"1.1.1.90"]],
  dot:[[112,286],[567,292],[771,296],[944,296],[461,392],[374,436],[567,457],[374,568],[683,578],[787,554]],
  txt:[[84,276,"Tyrosine"],[81,395,"Tyrosine"],[81,407,"metabolism"],[480,188,"Phenylalanine, tyrosine and"],[480,200,"tryptophan biosynthesis"],[247,242,"Tropane, piperidine and"],[247,254,"pyridine alkaloid biosynthesis"],[575,317,"Phenylalanine"],[738,283,"D-Phenylalanine"],[413,415,"N-Acetyl-"],[413,428,"L-phenylalanine"],[290,431,"Phenyl-"],[290,443,"ethylamine"],[573,489,"Phenylpyruvate"],[279,560,"Phenyl-"],[279,573,"acetaldehyde"],[642,602,"Phenyllactate"],[747,577,"2-Hydroxy-"],[747,590,"3-phenylpropanoate"],[894,323,"N-Acetyl-"],[894,336,"D-phenylalanine"],[876,469,"trans-3-"],[876,482,"Hydroxy-"],[876,494,"cinnamate"]]},
 {x:900,y:0,
  solid:["M234 169H362","M374 168H504","M368 162V145Q370 131 385 131H504","M516 131H646","M516 168H646","M660 168H778","M145 204H118","M225 250V175","M229 250V218Q226 206 208 204","M285 257H234","M518 257H388","M127 350V330Q129 317 142 317H600Q615 319 615 332V360","M127 355H430","M114 362H65Q52 363 52 380V468","M127 362H212Q225 364 225 378V430","M120 362V530","M436 361V427","M231 433H430","M231 443H342","M615 374V430","M615 444V530","M225 444V530","M120 542V620","M225 542V620","M615 542V626","M347 449V602Q345 620 333 620H234","M436 440V615Q434 632 420 632H234","M52 483V615Q54 628 67 628H114"],
  dash:["M120 350V270Q122 257 140 257H220","M621 368H785Q797 370 797 382V446","M797 459V554"],
  pill:[[716,559,166,30]],
  box:[[52,245,"4.3.1.24"],[52,270,"4.3.1.25"],[295,168,"2.6.1.-"],[571,131,"2.1.1.-"],[571,168,"2.1.1.-"],[720,168,"1.5.1.18"],[175,206,"1.14.13.-"],[313,257,"3.5.1.32"],[460,257,"2.3.1.71"],[340,320,"1.14.13.11"],[340,357,"1.14.13.14"],[225,393,"1.3.1.31"],[436,391,"1.3.1.11"],[616,398,"6.2.1.12"],[120,479,"1.14.12.19"],[225,479,"1.14.12.19"],[616,481,"1.14.13.-"],[52,544,"1.14.13.127"],[348,557,"1.14.13.127"],[436,557,"1.14.13.4"],[616,576,"2.1.1.104"],[120,580,"1.3.1.87"],[225,580,"1.3.1.87"]],
  dot:[[228,169],[368,168],[510,131],[511,168],[785,168],[111,204],[227,257],[380,257],[524,257],[120,356],[436,355],[615,368],[225,438],[347,443],[436,434],[615,438],[797,453],[51,477],[120,536],[225,536],[615,536]],
  txt:[[437,113,"Norpseudoephedrine"],[667,136,"Pseudoephedrine"],[42,173,"1-Phenylpropane-1,2-dione"],[337,193,"Cathinone"],[471,193,"Norephedrine"],[617,193,"Ephedrine"],[742,193,"(R)-2-Methylimino-1-"],[742,206,"phenylpropan-1-ol"],[40,210,"Salicylate"],[197,279,"Benzoate"],[356,278,"Hippurate"],[508,280,"Benzoyl-CoA"],[72,382,"trans-Cinnamate"],[447,362,"trans-2-Hydroxy-"],[447,375,"cinnamate"],[630,347,"trans-4-Hydroxy-"],[630,360,"cinnamate"],[144,433,"Phenyl-"],[144,446,"propanoate"],[447,432,"2-Hydroxyphenyl-"],[447,445,"propanoate"],[295,470,"3-Hydroxyphenyl-"],[295,483,"propanoate"],[630,445,"4-Coumaroyl-CoA"],[812,457,"4-Hydroxy-"],[812,469,"benzoate"],[128,536,"CI-dihydro-"],[128,549,"diol"],[236,540,"PP-dihydrodiol"],[512,543,"Caffeoyl-CoA"],[731,580,"Benzoate degradation"]]},
 {x:0,y:570,
  solid:["M230 0V92","M374 92V5","M374 5V92","M388 2H430Q442 4 442 15V85Q440 96 428 96H386","M513 20V48","M236 100H366","M382 104H560","M567 110V156","M379 108V230","M386 232H422Q434 230 434 218V122Q432 110 420 110H386","M386 237H528","M540 237H660","M674 237H784","M372 235H300Q283 236 283 250V370","M379 243V370","M383 243V290Q385 303 398 303H492","M616 303H508","M508 303H614","M628 303H738","M752 303H861","M868 309V390","M868 340Q868 360 884 360H938","M862 396H752","M738 396H628","M621 402V480","M621 440Q623 454 640 454H930Q946 452 946 440V368","M952 360H940"],
  dash:["M112 0V158Q114 171 130 171H364Q372 169 372 158V108","M112 112Q114 125 130 125H270","M366 125H286","M364 171H286","M573 104H676","M798 237H848","M627 487H966"],
  pill:[[681,88,146,30],[854,220,158,33]],
  box:[[374,48,"1.2.1.5"],[442,48,"1.2.1.39"],[298,100,"3.3.1.4"],[488,104,"1.14.13.-"],[434,162,"3.1.2.-"],[380,187,"6.2.1.30"],[469,237,"1.17.5.1"],[596,237,"3.1.2.25"],[727,237,"1.2.1.58"],[441,303,"1.14.13.149"],[561,303,"5.3.3.18"],[677,303,"3.3.2.12"],[802,303,"1.2.1.91"],[251,329,"2.3.1.192"],[316,329,"2.3.1.13"],[380,329,"2.3.1.14"],[868,339,"2.3.1.223"],[685,396,"1.1.1.157"],[814,396,"PaaF"],[621,428,"2.3.1.174"]],
  dot:[[513,54],[229,100],[374,100],[567,104],[278,125],[278,171],[567,162],[379,237],[537,237],[668,237],[792,237],[499,303],[622,303],[745,303],[868,303],[282,377],[379,377],[621,396],[744,396],[868,396],[621,487],[946,360]],
  txt:[[153,92,"2-Phenyl-"],[153,104,"acetamide"],[475,74,"Phenyl-"],[475,87,"ethylalcohol"],[577,84,"2-Hydroxy-"],[577,97,"phenylacetate"],[692,110,"Styrene degradation"],[382,130,"Phenyl-"],[382,143,"acetate"],[243,144,"4-Hydroxy-"],[243,157,"phenylacetate"],[243,193,"3-Hydroxy-"],[243,205,"phenylacetate"],[579,160,"2,6-Dihydroxy-"],[579,173,"phenylacetate"],[303,250,"Phenyl-"],[303,263,"acetyl-CoA"],[497,207,"Phenyl-"],[497,220,"glyoxylyl-CoA"],[632,211,"Phenyl-"],[632,224,"glyoxylate"],[744,222,"Benzoyl-CoA"],[864,242,"Benzoate degradation"],[569,275,"2-Oxepin-2(3H)-"],[569,287,"ylideneacetyl-CoA"],[438,333,"2-(1,2-epoxy-1,2-dihydro-"],[438,346,"phenyl)acetyl-CoA"],[660,329,"3-Oxo-5,6-dehydro-"],[660,342,"suberyl-CoA semialdehyde"],[838,278,"3-Oxo-5,6-didehydro-"],[838,290,"suberyl-CoA"],[914,350,"Acetyl-CoA"],[230,397,"Phenyl-"],[230,410,"acetylglycine"],[345,399,"Phenyl-"],[345,412,"acetylglutamine"],[532,385,"3-Oxoadipyl-CoA"],[697,421,"(3S)-3-Hydroxy-"],[697,434,"adipyl-CoA"],[843,418,"2,3-Didehydro-"],[843,431,"adipyl-CoA"],[576,511,"Succinyl-CoA"],[882,77,"trans-2,3-Dihydroxy-"],[882,90,"cinnamate"]]},
 {x:900,y:570,
  solid:["M120 20V50","M225 20V50","M120 64V146","M225 64V146","M120 159V274","M225 159V236","M120 228Q122 243 138 243H217","M225 195Q227 211 243 211H290","M225 249V314","M225 326V393","M225 360Q227 371 243 371H290","M225 480V407","M225 407V480","M615 20V58","M615 71V158","M615 170V246","M615 259V325","M615 338V404","M715 350H632Q617 351 615 362"],
  dash:["M306 211H378","M306 371H378","M120 288V466","M52 360H80Q94 362 94 375V466","M218 487H172","M722 142V202","M722 216V343","M768 268H736Q724 269 723 280"],
  pill:[[657,100,190,42],[383,196,102,30],[383,355,90,33],[73,470,96,32]],
  box:[[120,108,"1.13.11.16"],[225,108,"1.13.11.16"],[120,184,"3.7.1.14"],[225,184,"3.7.1.14"],[616,108,"4.2.1.101"],[616,204,"4.1.2.41"],[225,278,"4.2.1.80"],[225,353,"4.1.3.39"],[225,444,"1.2.1.10"]],
  dot:[[120,58],[225,58],[120,153],[225,153],[225,243],[120,281],[225,320],[225,400],[225,487],[298,211],[298,371],[615,65],[615,164],[615,253],[615,332],[615,411],[722,210],[775,268],[722,350]],
  txt:[[230,80,"2,3-Dihydroxy-"],[230,92,"phenylpropanoate"],[18,137,"2-Hydroxy-"],[18,150,"6-oxonona-"],[18,163,"trienedioate"],[236,148,"2-Hydroxy-6-oxonona-"],[236,161,"2,4-diene-1,9-dioate"],[270,201,"Succinate"],[393,216,"Citrate cycle"],[236,241,"cis-2-Hydroxypenta-"],[236,254,"2,4-dienoate"],[129,290,"Fumarate"],[236,317,"4-Hydroxy-"],[236,330,"2-oxopentanoate"],[396,377,"Glycolysis"],[270,394,"Pyruvate"],[132,406,"Acetaldehyde"],[79,491,"Citrate cycle"],[189,511,"Acetyl-CoA"],[513,70,"Feruloyl-CoA"],[673,120,"Valine,leucine,isoleucine"],[673,132,"degradation"],[423,149,"4-Hydroxy-"],[423,162,"3-methoxyphenyl-"],[423,174,"beta-hydroxypropionyl-CoA"],[551,259,"Vanillin"],[737,215,"Isobutyryl-CoA"],[787,273,"Malonyl-CoA"],[512,338,"Vanillylamine"],[735,355,"8-Methyl-6-nonenoic acid"],[585,434,"Capsaicin"]]}
];
let out = '<defs><marker id="a" markerUnits="userSpaceOnUse" markerWidth="14" markerHeight="12" refX="11" refY="6" orient="auto"><path d="M0 0L14 6L0 12Z"/></marker>'
 + '<marker id="h" markerUnits="userSpaceOnUse" markerWidth="14" markerHeight="12" refX="11" refY="6" orient="auto"><path d="M1 1L12 6L1 11Z" fill="#fff" stroke="#333" stroke-width="2"/></marker></defs>'
 + '<rect x="74" y="91" width="300" height="31" fill="none" stroke="#222" stroke-width="3"/><text x="86" y="114" font-size="18">PHENYLALANINE  METABOLISM</text>'
 + '<text x="40" y="1106" font-size="15">00360 3/27/12</text>'
 + '<g fill="#f44" stroke="#a22" stroke-width="2"><circle cx="1552" cy="131" r="12"/><circle cx="1553" cy="168" r="12"/></g>';
for (const t of tiles) {
  out += '<g transform="translate(' + t.x + ' ' + t.y + ')"><g fill="none" stroke="#333" stroke-width="2">';
  for (const d of t.solid) out += '<path d="' + d + '" marker-end="url(#a)"/>';
  for (const d of t.dash) out += '<path d="' + d + '" stroke-dasharray="12 5" marker-end="url(#h)"/>';
  out += '</g><g fill="#fff" stroke="#222" stroke-width="2">';
  for (const [x, y, w, h] of t.pill) out += '<rect x="' + x + '" y="' + y + '" width="' + w + '" height="' + h + '" rx="14"/>';
  for (const [x, y] of t.dot) if (t.x + x !== 1552) out += '<circle cx="' + x + '" cy="' + y + '" r="5"/>';
  for (const [x, y] of t.box) out += '<rect x="' + (x - 30) + '" y="' + (y - 11) + '" width="60" height="21"/>';
  out += '</g><g text-anchor="middle">';
  for (const [x, y, s] of t.box) out += '<text x="' + x + '" y="' + (y + 5) + '" font-size="' + (s.length > 9 ? 13 : s.length > 8 ? 15 : 16) + '">' + s + '</text>';
  out += '</g><g font-size="16">';
  for (const [x, y, s] of t.txt) out += '<text x="' + x + '" y="' + y + '">' + s + '</text>';
  out += '</g></g>';
}
out += '<g fill="none" stroke="#a00" stroke-width="2"><circle cx="1552" cy="131" r="5"/><circle cx="1553" cy="168" r="5"/></g>';
document.getElementById('map').innerHTML = out;
</script>
</body>
</html>
